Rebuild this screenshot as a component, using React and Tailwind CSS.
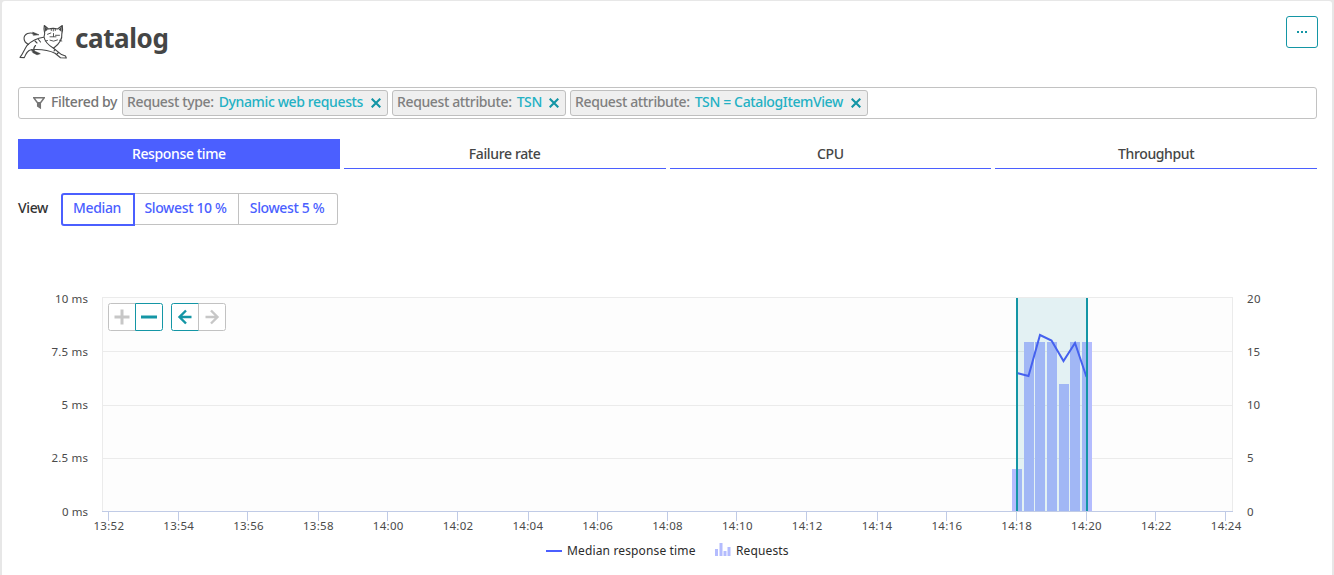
import React from "react";

const font = "font-['Noto_Sans','Open_Sans',sans-serif]";

function CatLogo() {
  return (
    <svg width="50" height="38" viewBox="18 23 50 38" fill="none" stroke="#454646" strokeWidth="1.1" strokeLinejoin="round" strokeLinecap="round">
      <path d="M44.700 33.500 C43.800 30 43.800 27.500 44.300 25.500 L48.500 29 Q53 27.800 57.500 29 L62.300 25.500 C62.900 28.500 62.500 31.500 61.800 34 C62.500 39 58.500 44.500 53.500 48.300 C49 45.500 44.800 41.500 44 37 Z" />
      <path d="M44.800 26.500 L47.800 29.500 L45.200 31.500 Z M61.800 26.500 L58.800 29.500 L61.300 31.500 Z" fill="#454646" strokeWidth=".3" />
      <path d="M51.300 28.700 V30.500 M53.300 28.300 V31 M55.300 28.700 V30.500 M47.500 34.300 L50.800 33 M55.500 35.300 H59.500 M50 36.800 H56 M53.500 33.500 V36.500 M50 40.300 Q53.500 42.300 57.500 40 M45.300 41 L47.500 40.500 M59.500 40.300 L61.800 41" strokeWidth=".9" />
      <path d="M43.500 37.300 C37 38.200 30.500 42 27 45.500 C24.500 49 23.500 53 20 57.400 L24.300 57.600 C26 53.500 27.500 50 31.500 49.700 C41 49 48.500 50 55 53.300 L60.500 57.700 L66.300 58 L65.500 56 L61.500 54.600 L53.500 48.300" />
      <path d="M28.500 44.500 C23 41.500 22.500 36 27.500 33.600 C30.500 32.300 32.500 32.900 35 34" />
      <path d="M33 32.300 L39 34.800 L33.500 35.200 Z M31.500 49.500 L35.500 51.500 L40.300 53.700 L37 54.800 L33 52.700 Z" fill="#454646" strokeWidth=".6" />
      <path d="M35 41 L37 43 M38.500 39.500 L40.500 42 M35.500 45.500 Q33 48 34 51 M55 49.500 L54 51 M58.500 52.500 L57 54" />
    </svg>
  );
}

function Chip({ label, value, box }) {
  return (
    <div className={`flex h-[26px] shrink-0 items-center rounded-[3px] border border-[#bfbfbf] bg-[#efefef] pl-1 pr-[6px] ${box}`}>
      <span className="-mt-[2px] whitespace-nowrap text-[#808080]">{label}</span>
      <span className="-mt-[2px] ml-[5px] whitespace-nowrap text-[#23b1c4]">{value}</span>
      <svg className="ml-auto" width="10" height="10" viewBox="0 0 10 10" stroke="#1395a5" strokeWidth="2.100">
        <path d="M.7 .7 L9.300 9.300 M9.300 .7 L.7 9.300" />
      </svg>
    </div>
  );
}

const tabs = ["Response time", "Failure rate", "CPU", "Throughput"];
const times = ["13:52", "13:54", "13:56", "13:58", "14:00", "14:02", "14:04", "14:06", "14:08", "14:10", "14:12", "14:14", "14:16", "14:18", "14:20", "14:22", "14:24"];
const tickX = [108, 178, 247, 318, 387, 457, 528, 597, 667, 736, 806, 877, 946, 1016, 1086, 1155, 1225];
const leftAxis = [["10 ms", 303, 33], ["7.5 ms", 356, 36.5], ["5 ms", 409, 26.500], ["2.5 ms", 462, 36.5], ["0 ms", 516, 26]];
const rightAxis = [["20", 303, 13.500], ["15", 356, 13], ["10", 409, 13], ["5", 462, 6], ["0", 516, 6.500]];
const bars = [[1012, 469], [1024, 342], [1035, 342], [1047, 342], [1059, 384], [1070, 342], [1082, 342]];

function Chart() {
  return (
    <svg className="block font-normal tracking-normal" width="1330" height="290" viewBox="2 285 1330 290" fontFamily="'Noto Sans','Open Sans',sans-serif" fontSize="11.500">
      <rect x="102.500" y="297.500" width="1130" height="214" fill="#fdfdfd" stroke="#ebebeb" />
      <path d="M103 351.500 H1232 M103 405.500 H1232 M103 458.500 H1232" stroke="#ebebeb" />
      {bars.map(([x, y]) => <rect key={x} x={x} y={y} width="10" height={511 - y} fill="#b4bcfe" />)}
      <rect x="1017" y="298" width="70" height="213" fill="#1496a5" fillOpacity=".11" />
      <rect x="1017" y="469" width="5" height="42" fill="#a1b7f5" />
      <rect x="1082" y="342" width="5" height="169" fill="#a1b7f5" />
      {bars.slice(1, 6).map(([x, y]) => <rect key={x} x={x} y={y} width="10" height={511 - y} fill="#a1b7f5" />)}
      <path d="M102 511.500 H1233" stroke="#c0cbe6" />
      {tickX.map((x) => <path key={x} d={`M${x + 0.5} 512 V521`} stroke="#c0cbe6" />)}
      <path d="M1017 373 L1028.500 376 L1040 335 L1051.500 340.500 L1063.500 361 L1075 343 L1086.500 377" fill="none" stroke="#4561ee" strokeWidth="2" />
      <path d="M1017 298 V511 M1087 298 V511" stroke="#1496a5" strokeWidth="2" />
      <g fill="#4a4a4a">
        {leftAxis.map(([s, y, w]) => <text key={s} x={88 - w} y={y} textLength={w}>{s}</text>)}
        {rightAxis.map(([s, y, w]) => <text key={s} x="1247" y={y} textLength={w}>{s}</text>)}
        {times.map((s, i) => <text key={s} x={93.5 + i * 69.83} y="530" textLength="30.500">{s}</text>)}
      </g>
      <path d="M546 551 H562" stroke="#4b5fff" strokeWidth="2" />
      <path d="M715 549 h3 v7 h-3 z M719.500 543 h3 v13 h-3 z M723.500 551 h3 v5 h-3 z M727.500 547 h3 v9 h-3 z" fill="#b4bcfe" />
      <g fill="#2b2b2b" fontSize="12">
        <text x="567" y="555" textLength="128.500">Median response time</text>
        <text x="736" y="555" textLength="52.500">Requests</text>
      </g>
      <g fill="#fff">
        <path d="M135.500 303.500 H110.500 a2 2 0 0 0 -2 2 V328.500 a2 2 0 0 0 2 2 H135.500 M198.500 303.500 H223.500 a2 2 0 0 1 2 2 V328.500 a2 2 0 0 1 -2 2 H198.500" stroke="#c2c2c2" />
        <path d="M135.500 303.500 H160.500 a2 2 0 0 1 2 2 V328.500 a2 2 0 0 1 -2 2 H135.500 Z M198.500 303.500 H173.500 a2 2 0 0 0 -2 2 V328.500 a2 2 0 0 0 2 2 H198.500" stroke="#1496a5" />
        <path d="M198.500 304 V330" stroke="#c2c2c2" />
      </g>
      <path d="M114.500 317 H129.500 M122 309.500 V324.500" stroke="#c7c7c7" strokeWidth="3" />
      <path d="M141 317 H157" stroke="#1496a5" strokeWidth="3" />
      <path d="M191.500 317 H179.500 M186 310.500 L179.500 317 L186 323.500" fill="none" stroke="#1496a5" strokeWidth="2.400" />
      <path d="M205.500 317 H217.500 M211 310.500 L217.500 317 L211 323.500" fill="none" stroke="#c7c7c7" strokeWidth="2.400" />
    </svg>
  );
}

export default function App() {
  return (
    <div className={`h-[575px] w-[1334px] overflow-hidden bg-[#e7e7e7] px-[2px] pt-px text-[14px] font-medium leading-[20px] tracking-[-0.37px] ${font}`}>
      <main className="flex h-[574px] flex-col rounded-t-[3px] bg-white">
        <header className="flex h-[86px] shrink-0 items-start justify-between pl-4 pr-[14px]">
          <div className="flex pt-[22px]">
            <CatLogo />
            <h1 className="-mt-[3px] ml-[7px] text-[26px] font-bold leading-[36px] tracking-[-0.4px] text-[#454646]">catalog</h1>
          </div>
          <button className="mt-[15px] flex h-8 w-8 items-center justify-center gap-[2px] rounded-[3px] border border-[#1496a5] bg-white">
            <i className="h-[2px] w-[2px] bg-[#1496a5]" />
            <i className="h-[2px] w-[2px] bg-[#1496a5]" />
            <i className="h-[2px] w-[2px] bg-[#1496a5]" />
          </button>
        </header>
        <section className="ml-4 flex h-8 w-[1299px] shrink-0 items-center gap-1 rounded-[3px] border border-[#c2c2c2]">
          <div className="flex w-[99px] shrink-0 items-center pl-[14px] text-[#757575]">
            <svg className="mr-[6px] shrink-0" width="12" height="12" viewBox="0 0 12 12">
              <path d="M.7 .8 H11.300 L7.300 6 V10.800 L4.700 9 V6 Z" fill="none" stroke="#757575" strokeWidth="1.500" />
              <path d="M4 5 H8 L7.500 6 V11 L4.700 9 V6 Z" fill="#757575" />
            </svg>
            <span className="-mt-[2px] whitespace-nowrap">Filtered by</span>
          </div>
          <Chip label="Request type:" value="Dynamic web requests" box="w-[266px]" />
          <Chip label="Request attribute:" value="TSN" box="w-[174px]" />
          <Chip label="Request attribute:" value="TSN = CatalogItemView" box="w-[298px]" />
        </section>
        <nav className="ml-4 mt-5 grid h-[30px] w-[1299px] shrink-0 grid-cols-4 gap-1">
          {tabs.map((t, i) => (
            <button key={t} className={i === 0 ? "flex h-[30px] flex-col bg-[#4b5fff] text-white" : "flex h-[30px] flex-col text-[#454646]"}>
              <span className="h-[29px] w-full leading-[30px]">{t}</span>
              <span className="h-px w-full bg-[#4b5fff]" />
            </button>
          ))}
        </nav>
        <section className="ml-4 mt-6 flex h-[34px] shrink-0">
          <span className="mt-[5px] w-[43px] text-[#333]">View</span>
          <button className="h-[33px] w-[74px] rounded-l-[3px] border-2 border-[#4b5fff] pb-[3px] pr-[2px] text-[#4b5fff]">Median</button>
          <button className="h-8 w-[104px] border-y border-r border-[#c2c2c2] pb-[2px] pr-[2px] text-[#4b5fff]">Slowest 10 %</button>
          <button className="h-8 w-[99px] rounded-r-[3px] border-y border-r border-[#c2c2c2] pb-[2px] pr-[2px] text-[#4b5fff]">Slowest 5 %</button>
        </section>
        <div className="mt-auto shrink-0">
          <Chart />
        </div>
      </main>
    </div>
  );
}
